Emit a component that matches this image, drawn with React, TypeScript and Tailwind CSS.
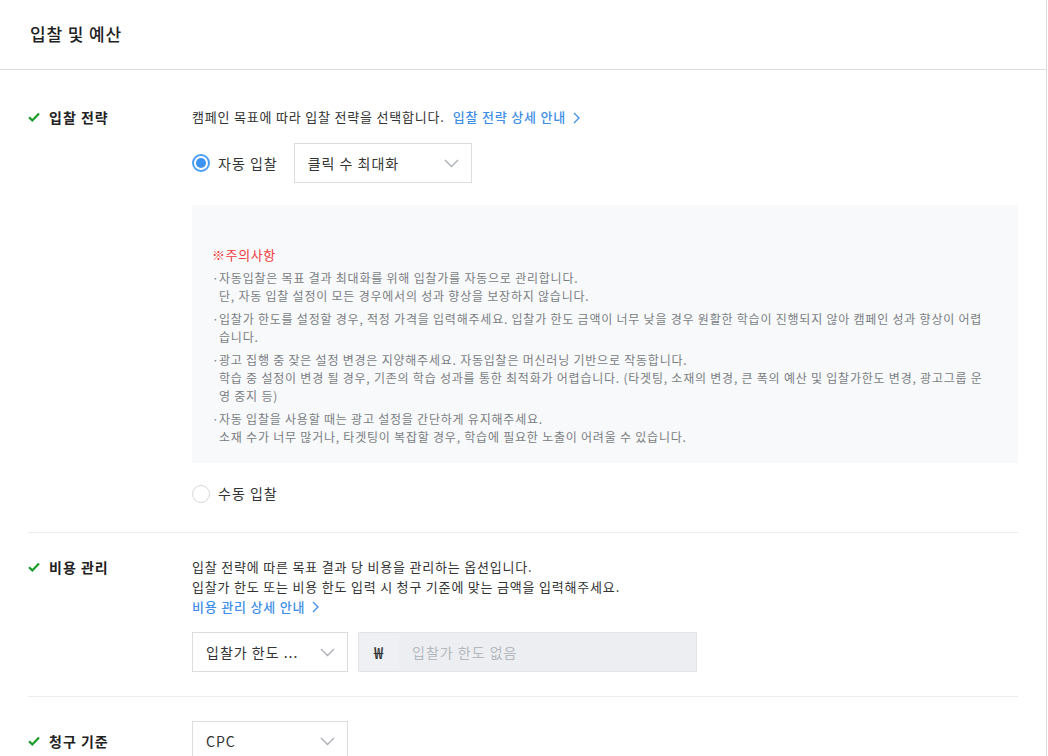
import React from "react"

const font = { fontFamily: '"Noto Sans CJK KR", "Noto Sans", sans-serif' }

function Check() {
  return (
    <svg width="12" height="10" viewBox="0 0 12 10" className="shrink-0">
      <path d="M1 5.2 L4.3 8.4 L11 1.4" fill="none" stroke="#1a9b2a" strokeWidth="2.2" />
    </svg>
  )
}

function Chevron() {
  return (
    <svg width="15" height="9" viewBox="0 0 15 9">
      <path d="M1 1 L7.5 7.5 L14 1" fill="none" stroke="#a9adb3" strokeWidth="1.3" />
    </svg>
  )
}

function LinkArrow() {
  return (
    <svg width="7" height="12" viewBox="0 0 7 12" className="ml-[7px] inline-block">
      <path d="M1 1 L6 6 L1 11" fill="none" stroke="#3f8fe6" strokeWidth="1.3" />
    </svg>
  )
}

function Radio({ checked }: { checked?: boolean }) {
  return checked ? (
    <span className="flex h-[18px] w-[18px] items-center justify-center rounded-full border-2 border-[#4ba0f6] bg-white">
      <span className="h-[10px] w-[10px] rounded-full bg-[#3d93f2]" />
    </span>
  ) : (
    <span className="h-[18px] w-[18px] rounded-full border border-[#d5d8dc] bg-white" />
  )
}

function Select({ label, width }: { label: string; width: string }) {
  return (
    <div className={`flex h-[40px] items-center justify-between border border-[#dcdde0] bg-white pl-[13px] pr-[12px] ${width}`}>
      <span className="text-[14px] tracking-[1px] text-[#333]">{label}</span>
      <Chevron />
    </div>
  )
}

function Label({ children }: { children: React.ReactNode }) {
  return (
    <div className="flex h-[20px] w-[164px] shrink-0 items-center gap-[9px]">
      <Check />
      <span className="text-[14px] font-bold tracking-[1px] text-[#222]">{children}</span>
    </div>
  )
}

const notices = [
  ["자동입찰은 목표 결과 최대화를 위해 입찰가를 자동으로 관리합니다.", "단, 자동 입찰 설정이 모든 경우에서의 성과 향상을 보장하지 않습니다."],
  ["입찰가 한도를 설정할 경우, 적정 가격을 입력해주세요. 입찰가 한도 금액이 너무 낮을 경우 원활한 학습이 진행되지 않아 캠페인 성과 향상이 어렵습니다."],
  [
    "광고 집행 중 잦은 설정 변경은 지양해주세요. 자동입찰은 머신러닝 기반으로 작동합니다.",
    "학습 중 설정이 변경 될 경우, 기존의 학습 성과를 통한 최적화가 어렵습니다. (타겟팅, 소재의 변경, 큰 폭의 예산 및 입찰가한도 변경, 광고그룹 운영 중지 등)",
  ],
  ["자동 입찰을 사용할 때는 광고 설정을 간단하게 유지해주세요.", "소재 수가 너무 많거나, 타겟팅이 복잡할 경우, 학습에 필요한 노출이 어려울 수 있습니다."],
]

export default function App() {
  return (
    <div className="h-[756px] w-[1047px] overflow-hidden border-r border-[#dcdcdc] bg-white" style={font}>
      {/* Header */}
      <div className="flex h-[70px] items-center border-b border-[#dcdcdc] px-[30px] pb-[2px]">
        <h1 className="text-[17px] font-medium tracking-[0.9px] text-[#222]">입찰 및 예산</h1>
      </div>

      <div className="px-[28px]">
        {/* 입찰 전략 */}
        <div className="flex border-b border-[#ececec] pb-[28px] pt-[37px]">
          <Label>입찰 전략</Label>
          <div className="flex-1">
            <p className="text-[13px] leading-[20px] tracking-[0.8px] text-[#333]">
              캠페인 목표에 따라 입찰 전략을 선택합니다.
              <a className="ml-[8px] font-medium text-[#3f8fe6]">
                입찰 전략 상세 안내
                <LinkArrow />
              </a>
            </p>
            <div className="mt-[16px] flex items-center">
              <Radio checked />
              <span className="ml-[8px] mr-[16px] text-[14px] tracking-[1px] text-[#333]">자동 입찰</span>
              <Select label="클릭 수 최대화" width="w-[178px]" />
            </div>
            <div className="mt-[22px] bg-[#f8f9fb] pb-[17px] pl-[20px] pr-[28px] pt-[40px]">
              <p className="text-[13px] leading-[20px] tracking-[0.6px] text-[#ee3a3a]">※주의사항</p>
              <ul className="mt-[4px] text-[12px] leading-[18px] tracking-[0.78px] text-[#7a7d82]">
                {notices.map((lines, i) => (
                  <li key={i} className={`flex ${i > 0 ? "mt-[5px]" : ""}`}>
                    <span className="w-[7px] shrink-0 tracking-normal">·</span>
                    <div>
                      {lines.map((l, j) => (
                        <p key={j}>{l}</p>
                      ))}
                    </div>
                  </li>
                ))}
              </ul>
            </div>
            <div className="mt-[20px] flex items-center">
              <Radio />
              <span className="ml-[8px] text-[14px] tracking-[1px] text-[#333]">수동 입찰</span>
            </div>
          </div>
        </div>

        {/* 비용 관리 */}
        <div className="flex border-b border-[#ececec] pb-[24px] pt-[24px]">
          <Label>비용 관리</Label>
          <div className="flex-1 tracking-[0.8px]">
            <p className="text-[13px] leading-[20px] text-[#333]">입찰 전략에 따른 목표 결과 당 비용을 관리하는 옵션입니다.</p>
            <p className="text-[13px] leading-[20px] text-[#333]">입찰가 한도 또는 비용 한도 입력 시 청구 기준에 맞는 금액을 입력해주세요.</p>
            <a className="flex items-center text-[13px] font-medium leading-[20px] text-[#3f8fe6]">
              비용 관리 상세 안내
              <LinkArrow />
            </a>
            <div className="mt-[15px] flex gap-[10px]">
              <Select label="입찰가 한도 ..." width="w-[156px]" />
              <div className="flex h-[40px] w-[339px] items-center border border-[#e2e4e7] bg-[#eceef1]">
                <span className="flex h-full w-[40px] items-center justify-center bg-[#eef0f3] text-[16px] font-medium text-[#333]">₩</span>
                <span className="ml-[13px] text-[14px] tracking-[1px] text-[#b4b8be]">입찰가 한도 없음</span>
              </div>
            </div>
          </div>
        </div>

        {/* 청구 기준 */}
        <div className="flex items-center pt-[24px]">
          <Label>청구 기준</Label>
          <Select label="CPC" width="w-[156px]" />
        </div>
      </div>
    </div>
  )
}
